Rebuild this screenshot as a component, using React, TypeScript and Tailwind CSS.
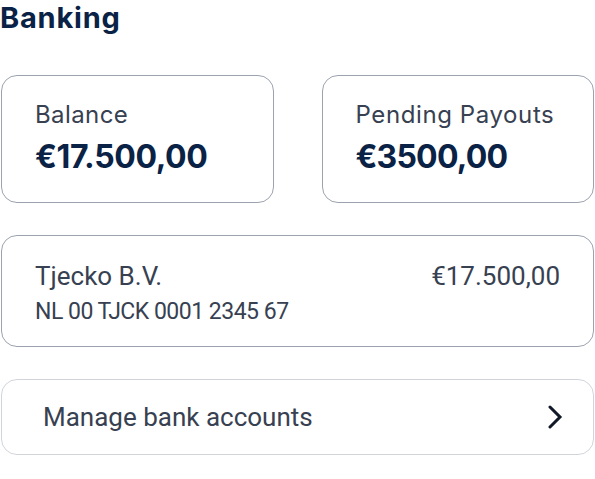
export default function App() {
  return (
    <main className="w-[595px] bg-white text-[#0a2245]" style={{ fontFamily: 'Inter, "Noto Sans", sans-serif' }}>
      <h1 className="text-[29px] font-bold leading-[36px] tracking-[0.8px]">Banking</h1>

      <div className="mt-[39px] flex gap-[48px] px-[1px]">
        <div className="w-[273px] h-[128px] rounded-[16px] border border-[#9ca3af] px-[33px] pt-[23px]">
          <p className="text-[24px] leading-[32px] text-[#374151] tracking-[0.4px]">Balance</p>
          <p className="text-[32px] font-bold leading-[40px] mt-[6px] tracking-[-0.4px]">€17.500,00</p>
        </div>
        <div className="w-[273px] h-[128px] rounded-[16px] border border-[#9ca3af] px-[33px] pt-[23px]">
          <p className="text-[24px] leading-[32px] text-[#374151] tracking-[0.6px]">Pending Payouts</p>
          <p className="text-[32px] font-bold leading-[40px] mt-[6px] tracking-[-0.8px]">€3500,00</p>
        </div>
      </div>

      <div
        className="mt-[32px] mx-[1px] h-[112px] rounded-[16px] border border-[#9ca3af] px-[33px] pt-[24px] text-[#374151]"
        style={{ fontFamily: 'Roboto, sans-serif' }}
      >
        <div className="flex justify-between items-center">
          <span className="text-[26px] leading-[32px]">Tjecko B.V.</span>
          <span className="text-[26px] leading-[32px]">€17.500,00</span>
        </div>
        <p className="text-[23px] leading-[28px] mt-[6px] tracking-[-0.5px]">NL 00 TJCK 0001 2345 67</p>
      </div>

      <button
        className="mt-[32px] mx-[1px] w-[593px] h-[76px] rounded-[16px] border border-[#d1d5db] pl-[41px] pr-[30px] flex items-center justify-between text-[#374151]"
        style={{ fontFamily: 'Roboto, sans-serif' }}
      >
        <span className="text-[26px] leading-[32px]">Manage bank accounts</span>
        <svg width="16" height="24" viewBox="0 0 16 24" fill="none">
          <path d="M3 2l10 10-10 10" stroke="#111827" strokeWidth="3" strokeLinecap="round" />
        </svg>
      </button>
    </main>
  );
}
